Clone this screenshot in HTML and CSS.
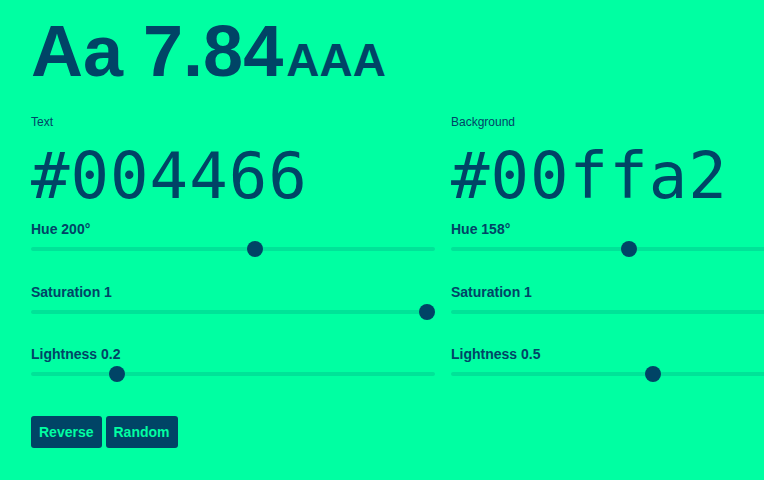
FILE: index.html
```html
<!DOCTYPE html>
<html>
<head>
<meta charset="utf-8">
<link rel="stylesheet" href="styles.css">
</head>
<body>
<main class="page">
  <h1 class="score">Aa 7.84<span class="rating">AAA</span></h1>
  <div class="columns">
    <section class="col">
      <div class="label">Text</div>
      <div class="hex">#004466</div>
      <div class="slider">
        <div class="slider-label">Hue 200°</div>
        <div class="track"><div class="range"><div class="thumb" style="left: 55.56%"></div></div></div>
      </div>
      <div class="slider">
        <div class="slider-label">Saturation 1</div>
        <div class="track"><div class="range"><div class="thumb" style="left: 100%"></div></div></div>
      </div>
      <div class="slider">
        <div class="slider-label">Lightness 0.2</div>
        <div class="track"><div class="range"><div class="thumb" style="left: 20%"></div></div></div>
      </div>
      <div class="buttons">
        <button class="btn">Reverse</button>
        <button class="btn">Random</button>
      </div>
    </section>
    <section class="col">
      <div class="label">Background</div>
      <div class="hex">#00ffa2</div>
      <div class="slider">
        <div class="slider-label">Hue 158°</div>
        <div class="track"><div class="range"><div class="thumb" style="left: 43.89%"></div></div></div>
      </div>
      <div class="slider">
        <div class="slider-label">Saturation 1</div>
        <div class="track"><div class="range"><div class="thumb" style="left: 100%"></div></div></div>
      </div>
      <div class="slider">
        <div class="slider-label">Lightness 0.5</div>
        <div class="track"><div class="range"><div class="thumb" style="left: 50%"></div></div></div>
      </div>
    </section>
  </div>
</main>
</body>
</html>
```

FILE: styles.css
```css
html, body {
  margin: 0;
  padding: 0;
  background: #00ffa2;
  overflow: hidden;
}

body {
  color: #004466;
  font-family: "Liberation Sans", Arial, sans-serif;
}

.page {
  padding: 15px 0 0 31px;
  width: 900px;
}

.score {
  margin: 0;
  font-size: 72px;
  line-height: 1;
  font-weight: 700;
  white-space: nowrap;
}

.rating {
  font-size: 46px;
  margin-left: 3px;
}

.columns {
  display: grid;
  grid-template-columns: 404px 404px;
  column-gap: 16px;
  margin-top: 27px;
}

.label {
  font-size: 12px;
  line-height: 16px;
}

.hex {
  font-family: "DejaVu Sans Mono", monospace;
  font-size: 64px;
  letter-spacing: 1px;
  line-height: 1;
  margin-top: 14px;
  margin-bottom: 11px;
  white-space: nowrap;
}

.slider {
  margin-bottom: 24.5px;
}

.slider-label {
  font-size: 14px;
  font-weight: 700;
  line-height: 20px;
  margin-bottom: 2px;
}

.track {
  position: relative;
  height: 16px;
  padding: 0 8px;
}

.track::before {
  content: "";
  position: absolute;
  left: 0;
  right: 0;
  top: 6px;
  height: 4px;
  border-radius: 2px;
  background: rgba(0, 68, 102, 0.15);
}

.range {
  position: relative;
  height: 16px;
}

.thumb {
  position: absolute;
  top: 0;
  width: 16px;
  height: 16px;
  margin-left: -8px;
  border-radius: 50%;
  background: #004466;
}

.buttons {
  display: flex;
  gap: 4px;
  margin-top: 34px;
}

.btn {
  font-family: "Liberation Sans", Arial, sans-serif;
  font-size: 14px;
  font-weight: 700;
  line-height: 16px;
  padding: 8px;
  border: 0;
  border-radius: 3px;
  background: #004466;
  color: #00ffa2;
}
```
